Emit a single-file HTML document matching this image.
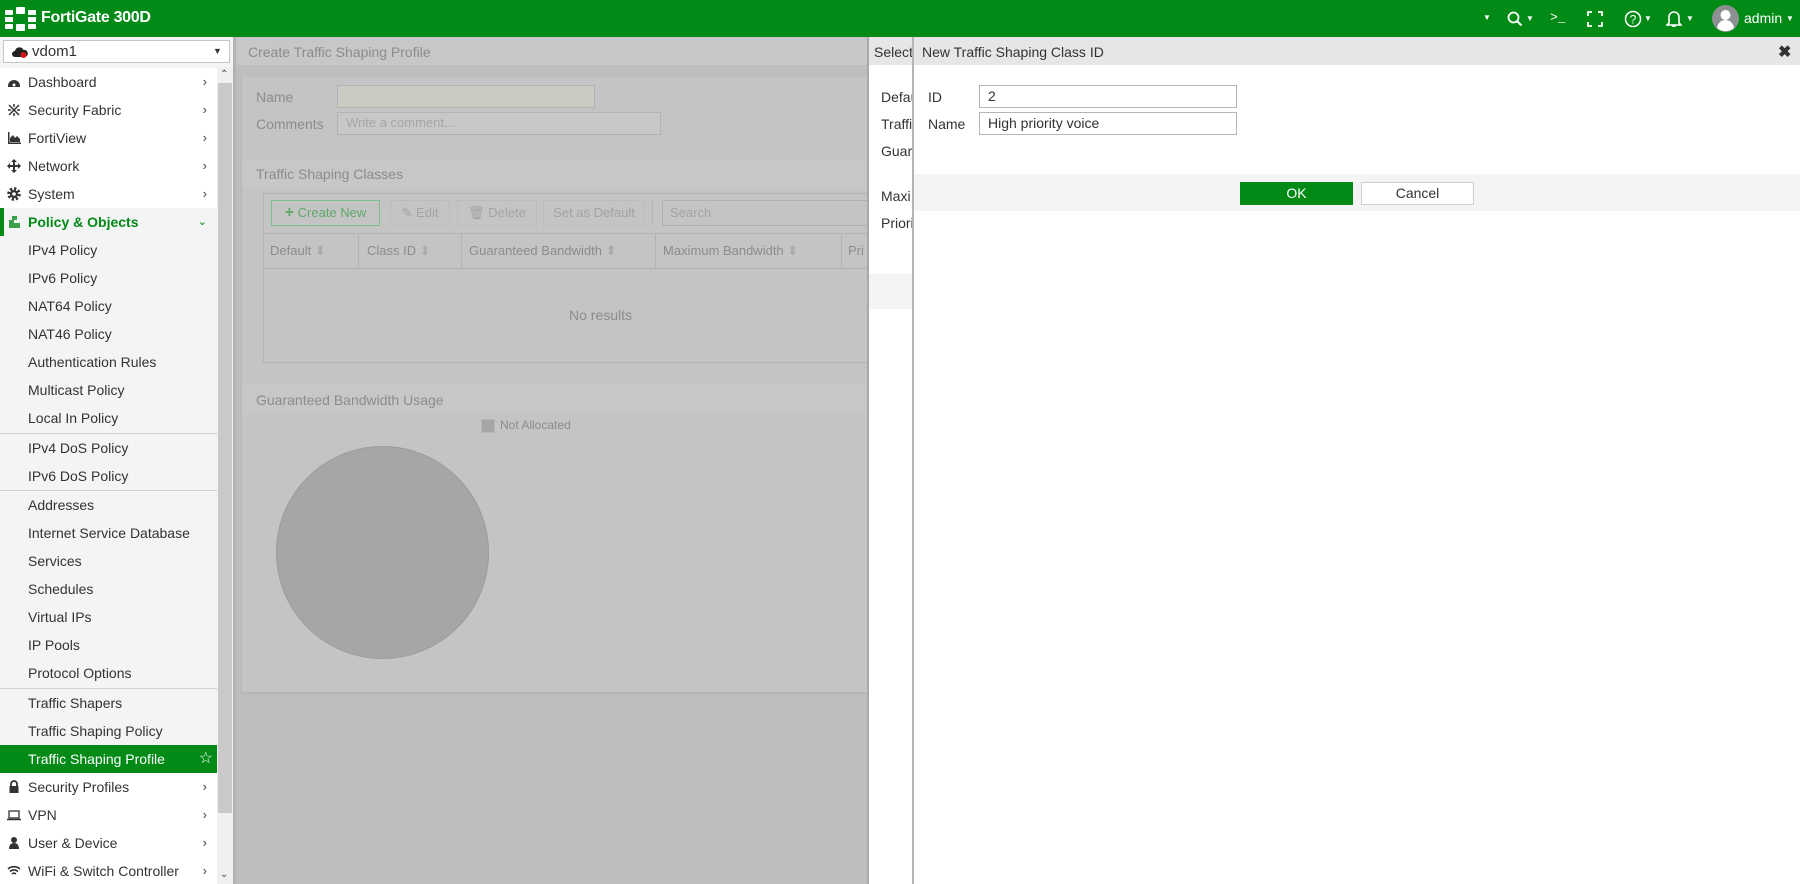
<!DOCTYPE html>
<html><head><meta charset="utf-8">
<style>
*{box-sizing:border-box;margin:0;padding:0}
body{width:1800px;height:884px;overflow:hidden;font-family:"Liberation Sans",sans-serif;font-size:14px;color:#333;background:#bebebe;position:relative}
.abs{position:absolute;white-space:nowrap}
#hdr{left:0;top:0;width:1800px;height:37px;background:#018a16;color:#fff}
#side{left:0;top:37px;width:233px;height:847px;background:#f4f4f4}
.mi{position:absolute;left:0;width:217px;height:28px;line-height:28px;padding-left:28px;white-space:nowrap}
.top{background:#fff}
.sub{background:#f4f4f4}
.chev{position:absolute;right:10px;top:0;color:#444;font-size:13px}
.ic{position:absolute;left:7px;top:7px;width:14px;height:14px}
.sep{position:absolute;left:0;width:217px;height:1px;background:#cfcfcf}
.g{color:#8c8c8c}
.inp{position:absolute;border:1px solid #b5b5b5;background:#fff;height:23px;line-height:21px;padding-left:8px;color:#333}
.btn{position:absolute;top:200px;height:26px;border:1px solid #bcbcbc;color:#a3a3a3;line-height:24px;text-align:center;font-size:13px;white-space:nowrap}
.th{position:absolute;top:243px;color:#8c8c8c;font-size:13px;white-space:nowrap}
.vl{position:absolute;top:234px;width:1px;height:34px;background:#b3b3b3}
</style></head><body>

<div id="hdr" class="abs">
  <svg class="abs" style="left:5px;top:7px" width="31" height="24" viewBox="0 0 31 24">
    <g fill="#fff">
      <rect x="0" y="3" width="8" height="5" rx="1"/><rect x="11" y="0" width="9" height="7" rx="1"/><rect x="23" y="3" width="8" height="5" rx="1"/>
      <rect x="0" y="10" width="8" height="5"/><rect x="23" y="10" width="8" height="5"/>
      <rect x="0" y="17" width="8" height="5" rx="1"/><rect x="11" y="17" width="9" height="7" rx="1"/><rect x="23" y="17" width="8" height="5" rx="1"/>
    </g>
  </svg>
  <div class="abs" style="left:41px;top:9px;font-size:16px;font-weight:bold;letter-spacing:-0.3px">FortiGate 300D</div>
  <div class="abs" style="left:1483px;top:13px;font-size:8px">▼</div>
  <svg class="abs" style="left:1507px;top:11px" width="16" height="16" viewBox="0 0 16 16"><circle cx="6.5" cy="6.5" r="5" fill="none" stroke="#fff" stroke-width="1.8"/><path d="M10 10l4.5 4.5" stroke="#fff" stroke-width="2"/></svg>
  <div class="abs" style="left:1526px;top:14px;font-size:8px">▼</div>
  <div class="abs" style="left:1550px;top:10px;font-size:13px;font-family:'Liberation Mono',monospace">&gt;_</div>
  <svg class="abs" style="left:1587px;top:11px" width="16" height="16" viewBox="0 0 16 16" fill="none" stroke="#fff" stroke-width="1.8"><path d="M1 5V1h4M11 1h4v4M15 11v4h-4M5 15H1v-4"/></svg>
  <svg class="abs" style="left:1624px;top:10px" width="18" height="18" viewBox="0 0 18 18"><circle cx="9" cy="9" r="7.5" fill="none" stroke="#fff" stroke-width="1.5"/><text x="9" y="13.5" font-size="12" font-family="Liberation Sans" fill="#fff" text-anchor="middle">?</text></svg>
  <div class="abs" style="left:1644px;top:14px;font-size:8px">▼</div>
  <svg class="abs" style="left:1666px;top:9px" width="16" height="19" viewBox="0 0 16 19" fill="none" stroke="#fff" stroke-width="1.6"><path d="M3 14V8a5 5 0 0 1 10 0v6l2 2H1z"/><path d="M6 17h4"/></svg>
  <div class="abs" style="left:1686px;top:14px;font-size:8px">▼</div>
  <svg class="abs" style="left:1712px;top:5px" width="27" height="27" viewBox="0 0 27 27"><circle cx="13.5" cy="13.5" r="13.5" fill="#8d9092"/><circle cx="13.5" cy="10" r="5" fill="#fff"/><path d="M5 23c1-6 5-8 8.5-8s7.5 2 8.5 8a13 13 0 0 1-17 0z" fill="#fff"/></svg>
  <div class="abs" style="left:1744px;top:10px;font-size:14px">admin</div>
  <div class="abs" style="left:1786px;top:14px;font-size:8px">▼</div>
</div>

<div id="side" class="abs">
  <div class="abs" style="left:3px;top:3px;width:227px;height:23px;border:1px solid #c6c6c6;background:#fff"></div>
  <svg class="abs" style="left:12px;top:9px" width="16" height="12" viewBox="0 0 16 12"><path d="M3 11a3 3 0 0 1 0-6 4.5 4.5 0 0 1 8.5-1A3.5 3.5 0 0 1 13 11z" fill="#222"/><circle cx="11.5" cy="9" r="3" fill="#d0161b"/></svg>
  <div class="abs" style="left:32px;top:6px;font-size:15px">vdom1</div>
  <div class="abs" style="left:213px;top:9px;font-size:9px">▼</div>
  <div class="abs" style="left:217px;top:30px;width:16px;height:817px;background:#f0f0f0"></div>
  <div class="abs" style="left:218px;top:46px;width:14px;height:730px;background:#c9c9c9"></div>
  <div class="abs" style="left:220px;top:32px;font-size:10px;color:#444">⌃</div>
  <div class="abs" style="left:220px;top:832px;font-size:10px;color:#444">⌄</div>
</div>

<div class="abs" style="left:0;top:68px;width:217px;height:816px;overflow:hidden">
<div style="position:relative">
<div class="mi top" style="top:0"><svg class="ic" viewBox="0 0 14 14"><path d="M1 11a6 6 0 0 1 12 0v1H1z" fill="#333"/><circle cx="7" cy="10" r="1.5" fill="#fff"/></svg>Dashboard<span class="chev">›</span></div>
<div class="mi top" style="top:28px"><svg class="ic" viewBox="0 0 14 14" stroke="#333" stroke-width="1.5"><path d="M2 2l10 10M12 2L2 12M7 1v3M7 10v3M1 7h3M10 7h3"/></svg>Security Fabric<span class="chev">›</span></div>
<div class="mi top" style="top:56px"><svg class="ic" viewBox="0 0 14 14"><path d="M1 1v12h13v-1.5H2.5V1z" fill="#333"/><path d="M3 11V7l3-3 2 3 2-2 3 3v3z" fill="#333"/></svg>FortiView<span class="chev">›</span></div>
<div class="mi top" style="top:84px"><svg class="ic" viewBox="0 0 14 14" fill="#333"><path d="M6 3h2v8H6zM3 6h8v2H3z"/><path d="M7 0l3 3H4zM7 14l3-3H4zM0 7l3-3v6zM14 7l-3-3v6z"/></svg>Network<span class="chev">›</span></div>
<div class="mi top" style="top:112px"><svg class="ic" viewBox="0 0 14 14"><circle cx="7" cy="7" r="5" fill="none" stroke="#333" stroke-width="3.5" stroke-dasharray="2.2 1.7"/><circle cx="7" cy="7" r="4" fill="#333"/><circle cx="7" cy="7" r="1.8" fill="#fff"/></svg>System<span class="chev">›</span></div>
<div class="mi sub" style="top:140px;color:#018a16;font-weight:bold;border-left:4px solid #018a16;padding-left:24px"><svg class="ic" style="left:3px" viewBox="0 0 14 14"><path d="M2 13V5h3V1h5v4H7v3h6v5z" fill="#3aa04a"/></svg>Policy &amp; Objects<span class="chev" style="color:#018a16;font-weight:normal;font-size:11px">⌄</span></div>
<div class="mi sub" style="top:168px">IPv4 Policy</div>
<div class="mi sub" style="top:196px">IPv6 Policy</div>
<div class="mi sub" style="top:224px">NAT64 Policy</div>
<div class="mi sub" style="top:252px">NAT46 Policy</div>
<div class="mi sub" style="top:280px">Authentication Rules</div>
<div class="mi sub" style="top:308px">Multicast Policy</div>
<div class="mi sub" style="top:336px">Local In Policy</div>
<div class="sep" style="top:365px"></div>
<div class="mi sub" style="top:366px">IPv4 DoS Policy</div>
<div class="mi sub" style="top:394px">IPv6 DoS Policy</div>
<div class="sep" style="top:422px"></div>
<div class="mi sub" style="top:423px">Addresses</div>
<div class="mi sub" style="top:451px">Internet Service Database</div>
<div class="mi sub" style="top:479px">Services</div>
<div class="mi sub" style="top:507px">Schedules</div>
<div class="mi sub" style="top:535px">Virtual IPs</div>
<div class="mi sub" style="top:563px">IP Pools</div>
<div class="mi sub" style="top:591px">Protocol Options</div>
<div class="sep" style="top:620px"></div>
<div class="mi sub" style="top:621px">Traffic Shapers</div>
<div class="mi sub" style="top:649px">Traffic Shaping Policy</div>
<div class="mi" style="top:677px;background:#018a16;color:#fff">Traffic Shaping Profile<span class="chev" style="color:#fff;font-size:16px;right:4px">☆</span></div>
<div class="mi top" style="top:705px"><svg class="ic" viewBox="0 0 14 14"><path d="M4 6V4a3 3 0 0 1 6 0v2" fill="none" stroke="#333" stroke-width="1.8"/><rect x="2.5" y="6" width="9" height="7" fill="#333"/></svg>Security Profiles<span class="chev">›</span></div>
<div class="mi top" style="top:733px"><svg class="ic" viewBox="0 0 14 14"><rect x="2" y="3" width="10" height="7" fill="none" stroke="#333" stroke-width="1.3"/><path d="M0 11.5h14" stroke="#333" stroke-width="1.5"/></svg>VPN<span class="chev">›</span></div>
<div class="mi top" style="top:761px"><svg class="ic" viewBox="0 0 14 14" fill="#333"><circle cx="7" cy="4" r="3"/><path d="M2 13c0-4 2-6 5-6s5 2 5 6z"/></svg>User &amp; Device<span class="chev">›</span></div>
<div class="mi top" style="top:789px"><svg class="ic" viewBox="0 0 14 14" fill="none" stroke="#333" stroke-width="1.6"><path d="M1 5a9 9 0 0 1 12 0M3 7.5a6 6 0 0 1 8 0M5 10a3 3 0 0 1 4 0"/></svg>WiFi &amp; Switch Controller<span class="chev">›</span></div>
</div></div>

<!-- main (dimmed) -->
<div class="abs" style="left:233px;top:37px;width:634px;height:847px;background:#bebebe;border-left:3px solid #b3b3b3"></div>
<div class="abs" style="left:236px;top:37px;width:631px;height:28px;background:#c7c7c7"></div>
<div class="abs g" style="left:248px;top:44px;font-size:14px">Create Traffic Shaping Profile</div>
<div class="abs" style="left:242px;top:77px;width:625px;height:615px;background:#c4c4c4;box-shadow:0 1px 2px #b0b0b0"></div>
<div class="abs g" style="left:256px;top:89px">Name</div>
<div class="abs" style="left:337px;top:85px;width:258px;height:23px;background:#cbcbc4;border:1px solid #b3b3b3"></div>
<div class="abs g" style="left:256px;top:116px">Comments</div>
<div class="abs" style="left:337px;top:112px;width:324px;height:23px;background:#c8c8c8;border:1px solid #b3b3b3"></div>
<div class="abs" style="left:346px;top:115px;color:#a5a5a5;font-size:13px">Write a comment...</div>
<div class="abs" style="left:242px;top:160px;width:625px;height:28px;background:#c7c7c7"></div>
<div class="abs g" style="left:256px;top:166px">Traffic Shaping Classes</div>
<div class="abs" style="left:263px;top:193px;width:610px;height:170px;border:1px solid #b3b3b3"></div>
<div class="abs" style="left:264px;top:233px;width:610px;height:1px;background:#b3b3b3"></div>
<div class="btn" style="left:271px;width:109px;border-color:#7fbf8a;color:#5fa86c"><b style="font-size:16px">+</b> Create New</div>
<div class="btn" style="left:390px;width:60px">✎ Edit</div>
<div class="btn" style="left:457px;width:80px">🗑 Delete</div>
<div class="btn" style="left:543px;width:102px">Set as Default</div>
<div class="abs" style="left:652px;top:201px;width:1px;height:24px;background:#b5b5b5"></div>
<div class="abs" style="left:662px;top:200px;width:210px;height:26px;border:1px solid #b0b0b0;color:#a3a3a3;line-height:24px;padding-left:7px;font-size:13px">Search</div>
<div class="abs" style="left:264px;top:268px;width:610px;height:1px;background:#b3b3b3"></div>
<div class="vl" style="left:358px"></div>
<div class="vl" style="left:461px"></div>
<div class="vl" style="left:655px"></div>
<div class="vl" style="left:841px"></div>
<div class="th" style="left:270px">Default <span style="color:#aaa">⬍</span></div>
<div class="th" style="left:367px">Class ID <span style="color:#aaa">⬍</span></div>
<div class="th" style="left:469px">Guaranteed Bandwidth <span style="color:#aaa">⬍</span></div>
<div class="th" style="left:663px">Maximum Bandwidth <span style="color:#aaa">⬍</span></div>
<div class="th" style="left:848px">Pri</div>
<div class="abs g" style="left:569px;top:307px">No results</div>
<div class="abs" style="left:242px;top:384px;width:625px;height:30px;background:#c7c7c7"></div>
<div class="abs g" style="left:256px;top:392px">Guaranteed Bandwidth Usage</div>
<div class="abs" style="left:481px;top:419px;width:14px;height:14px;background:#a6a6a6;border:1px solid #b8b8b8"></div>
<div class="abs g" style="left:500px;top:418px;font-size:12px">Not Allocated</div>
<div class="abs" style="left:276px;top:446px;width:213px;height:213px;border-radius:50%;background:#a6a6a6;border:1px solid #9c9c9c"></div>

<!-- select panel -->
<div class="abs" style="left:867px;top:37px;width:46px;height:847px;background:#fff;border-left:2px solid #a9a9a9"></div>
<div class="abs" style="left:869px;top:37px;width:44px;height:28px;background:#e6e6e6"></div>
<div class="abs" style="left:874px;top:44px;overflow:hidden;width:39px">Select</div>
<div class="abs" style="left:881px;top:89px;width:32px;overflow:hidden">Default</div>
<div class="abs" style="left:881px;top:116px;width:32px;overflow:hidden">Traffic</div>
<div class="abs" style="left:881px;top:143px;width:32px;overflow:hidden">Guaranteed</div>
<div class="abs" style="left:881px;top:188px;width:32px;overflow:hidden">Maxi</div>
<div class="abs" style="left:881px;top:215px;width:32px;overflow:hidden">Priority</div>
<div class="abs" style="left:869px;top:274px;width:44px;height:35px;background:#f4f4f4"></div>

<!-- dialog -->
<div class="abs" style="left:912px;top:37px;width:888px;height:847px;background:#fff;border-left:2px solid #b5b5b5"></div>
<div class="abs" style="left:914px;top:37px;width:886px;height:28px;background:#e6e6e6"></div>
<div class="abs" style="left:922px;top:44px">New Traffic Shaping Class ID</div>
<div class="abs" style="left:1778px;top:42px;font-size:16px;font-weight:bold">✖</div>
<div class="abs" style="left:928px;top:89px">ID</div>
<div class="inp" style="left:979px;top:85px;width:258px">2</div>
<div class="abs" style="left:928px;top:116px">Name</div>
<div class="inp" style="left:979px;top:112px;width:258px">High priority voice</div>
<div class="abs" style="left:914px;top:174px;width:886px;height:37px;background:#f4f4f4"></div>
<div class="abs" style="left:1240px;top:182px;width:113px;height:23px;background:#018a16;color:#fff;text-align:center;line-height:23px">OK</div>
<div class="abs" style="left:1361px;top:182px;width:113px;height:23px;background:#fff;border:1px solid #cfcfcf;text-align:center;line-height:21px">Cancel</div>
</body></html>
